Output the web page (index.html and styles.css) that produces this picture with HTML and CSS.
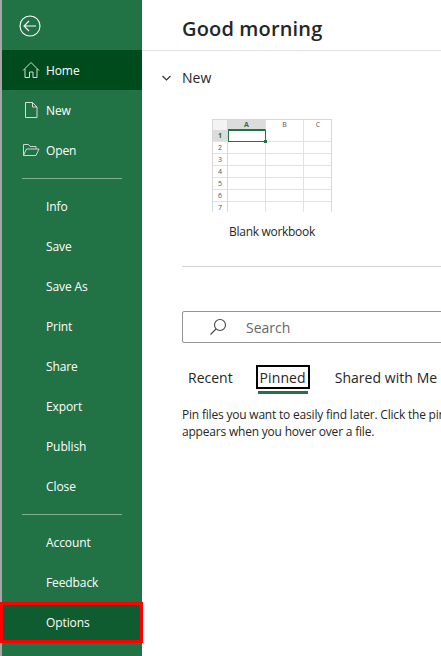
FILE: index.html
```html
<!DOCTYPE html>
<html lang="en">
<head>
<meta charset="utf-8">
<title>Excel</title>
<link rel="stylesheet" href="styles.css">
</head>
<body>
<div class="app">
  <nav class="sidebar">
    <div class="back">
      <svg width="22" height="22" viewBox="0 0 22 22" fill="none" stroke="#fff" stroke-width="1.1"><circle cx="11" cy="11" r="10"/><path d="M5 11h12M10 6l-5 5 5 5"/></svg>
    </div>
    <a class="item active"><span class="icon"><svg width="18" height="18" viewBox="0 0 18 18" fill="none" stroke="#d5dcd8" stroke-width="1"><path d="M1 9.5 9 1.5l8 8M3 8v8.5h4.500V11h3.500v5.500h4V8"/></svg></span>Home</a>
    <a class="item"><span class="icon"><svg width="18" height="18" viewBox="0 0 18 18" fill="none" stroke="#d5dcd8" stroke-width="1"><path d="M3.500 1.500h7l4.500 4.500v10.500H3.500zM10.500 1.500V6H15"/></svg></span>New</a>
    <a class="item"><span class="icon"><svg width="18" height="18" viewBox="0 0 18 18" fill="none" stroke="#cfd6d2" stroke-width="1"><path d="M1.500 14.500V3.500h5l1.500 2h6v2.500M1.500 14.500l3-6.500h12.500l-3 6.500z"/></svg></span>Open</a>
    <hr class="rule">
    <a class="item">Info</a>
    <a class="item">Save</a>
    <a class="item">Save As</a>
    <a class="item">Print</a>
    <a class="item">Share</a>
    <a class="item">Export</a>
    <a class="item">Publish</a>
    <a class="item">Close</a>
    <hr class="rule">
    <a class="item">Account</a>
    <a class="item">Feedback</a>
    <a class="item options">Options</a>
  </nav>
  <main class="main">
    <header class="greeting"><h1>Good morning</h1></header>
    <section class="new">
      <div class="new-head">
        <svg class="chev" width="9" height="6" viewBox="0 0 9 6" fill="none" stroke="#333" stroke-width="1.200"><path d="M.5 1l4 4 4-4"/></svg>
        <h2>New</h2>
      </div>
      <div class="card">
        <div class="sheet">
          <div class="corner"></div><div class="col sel">A</div><div class="col">B</div><div class="col">C</div>
          <div class="num sel">1</div><div class="cell cursor"></div><div class="cell"></div><div class="cell"></div>
          <div class="num">2</div><div class="cell"></div><div class="cell"></div><div class="cell"></div>
          <div class="num">3</div><div class="cell"></div><div class="cell"></div><div class="cell"></div>
          <div class="num">4</div><div class="cell"></div><div class="cell"></div><div class="cell"></div>
          <div class="num">5</div><div class="cell"></div><div class="cell"></div><div class="cell"></div>
          <div class="num">6</div><div class="cell"></div><div class="cell"></div><div class="cell"></div>
          <div class="num">7</div><div class="cell"></div><div class="cell"></div><div class="cell"></div>
        </div>
        <div class="card-label">Blank workbook</div>
      </div>
    </section>
    <div class="section-rule"></div>
    <div class="search">
      <svg width="18" height="18" viewBox="0 0 18 18" fill="none" stroke="#444" stroke-width="1.100"><circle cx="11" cy="7" r="5.500"/><path d="M7 11l-5.500 5.500"/></svg>
      <span>Search</span>
    </div>
    <div class="tabs">
      <span class="tab recent">Recent</span>
      <span class="tab pinned">Pinned</span>
      <span class="tab shared">Shared with Me</span>
    </div>
    <p class="hint">Pin files you want to easily find later. Click the pin icon that<br>appears when you hover over a file.</p>
  </main>
</div>
</body>
</html>
```

FILE: styles.css
```css
* { box-sizing: border-box; }
html, body { margin: 0; height: 100%; overflow: hidden; background: #fff; }
body { font-family: "Open Sans", "Noto Sans", sans-serif; color: #262626; }
.app { display: flex; width: 441px; height: 656px; overflow: hidden; }
.sidebar { flex: 0 0 142px; height: 656px; background: #217346; border-left: 2px solid #a6a6a6; color: #fff; display: flex; flex-direction: column; }
.back { flex: none; height: 50px; padding: 15px 0 0 16px; }
.back svg { display: block; margin-left: 1px; }
.item { flex: none; height: 40px; display: flex; align-items: center; padding-left: 44px; font-size: 12px; position: relative; letter-spacing: -0.1px; }
.item.active { background: #004b1c; }
.icon { position: absolute; left: 20px; top: 11px; width: 18px; height: 18px; }
.icon svg { display: block; }
.rule { border: 0; height: 1px; background: #7fb08f; margin: 8px 20px 7px 20px; flex: none; }
.options { background: #0e5c2f; }
.options::after { content: ""; position: absolute; left: -2px; right: -1px; top: 0; bottom: -1px; border: 3px solid #fe0000; }
.main { flex: 1; min-width: 0; }
.greeting { height: 51px; border-bottom: 1px solid #e1e1e1; padding: 15px 0 0 40px; }
h1 { margin: 0; font-size: 20px; line-height: 28px; font-weight: 600; letter-spacing: 0.15px; color: #262626; }
.new { height: 215px; padding: 17px 0 0 40px; position: relative; }
.new-head { display: flex; align-items: center; height: 20px; }
h2 { margin: 0; font-size: 14px; font-weight: 400; line-height: 20px; }
.chev { margin-left: -20px; margin-right: 11px; }
.card { margin: 31px 0 0 30px; width: 120px; }
.sheet { width: 120px; height: 93px; display: grid; grid-template-columns: 15px 38px 38px 29px; grid-template-rows: 10px repeat(7, 12px); background: #fff; border: 1px solid #d8d8d8; border-bottom: 0; overflow: hidden; font-size: 7px; line-height: 10px; color: #555; }
.corner { background: #f3f3f3; border-right: 1px solid #d8d8d8; }
.col { text-align: center; border-right: 1px solid #e2e2e2; }
.col.sel { background: #dcdcdc; color: #217346; font-weight: 700; border-bottom: 1px solid #217346; }
.num { text-align: center; border-right: 1px solid #d8d8d8; border-bottom: 1px solid #e2e2e2; background: #fff; line-height: 11px; }
.num.sel { background: #dcdcdc; color: #217346; font-weight: 700; }
.cell { border-right: 1px solid #e2e2e2; border-bottom: 1px solid #e2e2e2; }
.cursor { border: 1px solid #217346; position: relative; }
.cursor::after { content: ""; position: absolute; right: -2px; bottom: -2px; width: 3px; height: 3px; background: #217346; }
.card-label { margin-top: 12px; margin-left: -2px; width: 124px; font-size: 12px; line-height: 16px; font-weight: 500; text-align: center; letter-spacing: -0.3px; white-space: nowrap; }
.section-rule { height: 1px; background: #d4d4d4; margin-left: 40px; }
.search { margin: 44px 0 0 40px; height: 32px; width: 320px; border: 1px solid #949494; border-radius: 2px; display: flex; align-items: center; padding-left: 26px; gap: 19px; font-size: 14px; color: #666; }
.search svg { display: block; }
.tabs { display: flex; align-items: center; height: 24px; margin: 22px 0 0 46px; font-size: 14px; white-space: nowrap; }
.tab { display: block; line-height: 24px; }
.recent { padding-top: 1px; }
.pinned { margin-left: 23px; width: 54px; height: 24px; border: 2px solid #000; text-align: center; line-height: 22px; position: relative; letter-spacing: 0.1px; }
.pinned::after { content: ""; position: absolute; left: 0; width: 50px; bottom: -7px; height: 3px; background: #217346; }
.shared { margin-left: 25px; padding-top: 1px; letter-spacing: 0.05px; }
.hint { margin: 17px 0 0 40px; font-size: 12px; line-height: 17px; white-space: nowrap; letter-spacing: -0.2px; }
```
